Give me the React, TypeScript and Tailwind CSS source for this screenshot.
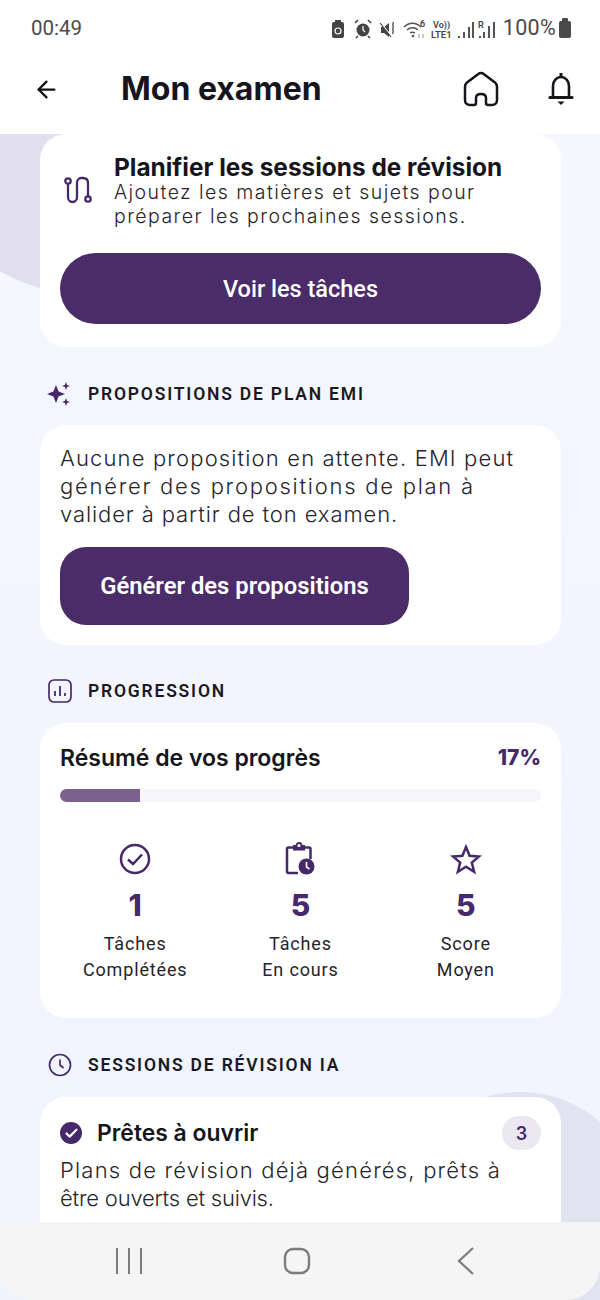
import React from "react";
import { ArrowLeft, Check } from "lucide-react";

const heading = "font-['Inter',sans-serif]";
const body = "font-['Inter',sans-serif]";
const label = "font-['Roboto',sans-serif]";

const SectionTitle: React.FC<{ icon: React.ReactNode; title: string }> = ({ icon, title }) => (
  <div className="flex h-[32px] items-center pt-[2px] pl-[6px]">
    <span className="flex w-[28px] justify-center">{icon}</span>
    <span className={`${label} ml-[14px] text-[17.5px] font-semibold tracking-[1.8px] text-[#1b1a20]`}>{title}</span>
  </div>
);

const Stat: React.FC<{ icon: React.ReactNode; value: string; lines: [string, string] }> = ({ icon, value, lines }) => (
  <div className="flex flex-col items-center">
    <div className="flex h-[36px] items-center">{icon}</div>
    <div className={`${heading} mt-[10px] h-[36px] text-[30px] leading-[36px] font-extrabold text-[#46296b]`}>{value}</div>
    <div className={`${label} mt-[8px] text-center text-[18px] leading-[26px] tracking-[0.85px] text-[#26242b]`}>
      {lines[0]}
      <br />
      {lines[1]}
    </div>
  </div>
);

const StatusBar: React.FC = () => (
  <div className="flex h-[44px] items-end justify-between pr-[29px] pb-[4px] pl-[31px] text-[#4a4a4a]">
    <span className={`${label} text-[20.5px] leading-[24px]`}>00:49</span>
    <div className="flex items-center">
      {/* notification icons, viewBox x = page x - 330 */}
      <svg width="170" height="24" viewBox="0 0 170 24" fill="none" className="mr-[3px]">
        <rect x="2" y="6" width="12" height="16" rx="2" fill="#444" />
        <rect x="5" y="4" width="6" height="3" fill="#444" />
        <circle cx="8" cy="15" r="3" stroke="#fff" strokeWidth="1.2" />
        <circle cx="33" cy="14" r="6.5" fill="#444" />
        <path d="M33 10v4l2 2" stroke="#fff" strokeWidth="1.2" />
        <path d="M25 7l3-3M41 7l-3-3M28 20l-2 2M38 20l2 2" stroke="#444" strokeWidth="1.6" />
        <path d="M51 11h3l5-4v14l-5-4h-3z" fill="#444" />
        <path d="M50 6l12 15" stroke="#fff" strokeWidth="1.4" />
        <path d="M50 7l11 14" stroke="#444" strokeWidth="1.2" />
        <path d="M63 6c1 1.500-1 2.500 0 4s-1 2.500 0 4-1 2.500 0 4" stroke="#444" strokeWidth="1.3" />
        <path d="M74 11c5-5 12-5 17 0M77 14c3-3 8-3 11 0M80 17c1.500-1 3.500-1 5 0" stroke="#555" strokeWidth="1.4" />
        <circle cx="83" cy="20" r="1.300" fill="#555" />
        <path d="M89 18v4M93 22v-4" stroke="#aaa" strokeWidth="1.200" />
        <text x="90" y="11" fontSize="9" fontWeight="600" fontFamily="Roboto, sans-serif" fill="#444">6</text>
        <text x="103" y="12" fontSize="9" fontWeight="600" fontFamily="Roboto, sans-serif" fill="#444">Vo))</text>
        <text x="101" y="22" fontSize="9.500" fontWeight="600" fontFamily="Roboto, sans-serif" fill="#444">LTE1</text>
        <path d="M129 20v2M134 16v6M139 11v11M143 6v16" stroke="#555" strokeWidth="2" />
        <text x="148" y="12" fontSize="9" fontWeight="600" fontFamily="Roboto, sans-serif" fill="#444">R</text>
        <path d="M150 20v2M154 16v6M159 10v12M164 6v16" stroke="#555" strokeWidth="2" />
      </svg>
      <span className={`${label} text-[21.5px] leading-[24px] tracking-[0.3px]`}>100%</span>
      <svg width="12" height="20" viewBox="0 0 12 20" className="ml-[3px]">
        <rect x="0" y="3" width="12" height="17" rx="2" fill="#4a4a4a" />
        <rect x="3" y="0" width="6" height="4" rx="1" fill="#4a4a4a" />
      </svg>
    </div>
  </div>
);

const App: React.FC = () => {
  return (
    <div className="relative flex h-[1300px] w-[600px] flex-col overflow-hidden bg-white">
      <StatusBar />
      <header className="flex h-[90px] items-center">
        <ArrowLeft className="ml-[33px] text-[#111]" size={27} strokeWidth={2} />
        <h1 className={`${heading} ml-[61px] text-[32px] font-bold text-[#17151c]`}>Mon examen</h1>
        <div className="ml-auto flex items-center pr-[26px]">
          <svg width="36" height="36" viewBox="0 0 36 36" fill="none" stroke="#17151c" strokeWidth="2.500">
            <path d="M18 2c-1 0-2 .4-3 1.200L4 11.500C2.500 12.700 2 14 2 16v13c0 3 2 5 5 5h4c1.200 0 2-1 2-2v-5c0-2.500 2-4 5-4s5 1.500 5 4v5c0 1 .8 2 2 2h4c3 0 5-2 5-5V16c0-2-.5-3.300-2-4.500L21 3.200C20 2.400 19 2 18 2z" />
          </svg>
          <svg width="26" height="32" viewBox="0 0 26 32" fill="none" stroke="#17151c" strokeWidth="2.600" className="ml-[49px]">
            <path d="M13 0v4" strokeWidth="3" />
            <path d="M5 24V13c0-5 3.500-9 8-9s8 4 8 9v11" />
            <path d="M2 24.500h22" strokeWidth="3.200" strokeLinecap="round" />
            <path d="M9.500 28.500h7L13 32z" fill="#17151c" stroke="none" />
          </svg>
        </div>
      </header>

      <main className="relative flex-1 overflow-hidden bg-gradient-to-b from-[#f5f7fe] to-[#f0f4ff]">
        {/* decorative blobs behind the cards */}
        <div className="absolute top-[-237px] left-[-102px] h-[400px] w-[400px] rounded-full bg-[#e2e0ee]" />
        <div className="absolute top-[958px] right-[-42px] h-[244px] w-[244px] rounded-full bg-[#e2e3f0]" />

        <div className="relative flex flex-col pr-[39px] pl-[40px]">
          <section className="h-[213px] rounded-[26px] bg-white px-[20px] pt-[20px]">
            <div className="flex">
              <svg width="30" height="30" viewBox="0 0 30 30" fill="none" stroke="#46296b" strokeWidth="2.300" className="mt-[21px] ml-[3px]">
                <circle cx="5" cy="6" r="2.700" />
                <circle cx="25" cy="24" r="2.700" />
                <path d="M5 9v13c0 3 2 5 4.500 5S14 25 14 22V8c0-3 2-5 4-5h2c3 0 5 2 5 5v13" />
              </svg>
              <div className="ml-[21px]">
                <div className={`${heading} text-[24.4px] leading-[26px] font-bold text-[#17151c]`}>Planifier les sessions de révision</div>
                <div className={`${body} text-[19.5px] leading-[24px] font-[350] tracking-[1.45px] text-[#26242b]`}>
                  Ajoutez les matières et sujets pour
                  <br />
                  préparer les prochaines sessions.
                </div>
              </div>
            </div>
            <button className={`${label} mt-[25px] h-[71px] w-full rounded-[36px] bg-[#4a2c69] pt-[2px] text-[23.5px] font-medium text-white`}>Voir les tâches</button>
          </section>

          <div className="mt-[30px]">
            <SectionTitle
              title="PROPOSITIONS DE PLAN EMI"
              icon={
                <svg width="28" height="28" viewBox="0 0 28 28" fill="#46296b">
                  <path d="M10 5l2.600 6.400L19 14l-6.400 2.600L10 23l-2.600-6.400L1 14l6.400-2.600z" />
                  <path d="M20 2l1.100 2.900L24 6l-2.900 1.100L20 10l-1.100-2.900L16 6l2.900-1.100z" />
                  <path d="M20 18l1.100 2.900L24 22l-2.900 1.100L20 26l-1.100-2.900L16 22l2.900-1.100z" />
                </svg>
              }
            />
          </div>

          <section className="mt-[16px] h-[220px] rounded-[26px] bg-white px-[20px] pt-[19px]">
            <p className={`${body} text-[22px] leading-[28px] font-[350] text-[#26242b]`}>
              <span className="block tracking-[1.15px]">Aucune proposition en attente. EMI peut</span>
              <span className="block tracking-[1.75px]">générer des propositions de plan à</span>
              <span className="block tracking-[0.9px]">valider à partir de ton examen.</span>
            </p>
            <button className={`${label} mt-[19px] h-[78px] w-[349px] rounded-[26px] bg-[#4a2c69] pt-[1px] text-[23.8px] font-semibold text-white`}>Générer des propositions</button>
          </section>

          <div className="mt-[29px]">
            <SectionTitle
              title="PROGRESSION"
              icon={
                <svg width="26" height="26" viewBox="0 0 26 26" fill="none" stroke="#46296b">
                  <rect x="2" y="2" width="22" height="22" rx="5" strokeWidth="1.700" />
                  <path d="M8 18v-5M13 18V8M18 18v-3" strokeWidth="1.800" />
                </svg>
              }
            />
          </div>

          <section className="mt-[17px] h-[295px] rounded-[26px] bg-white px-[20px] pt-[21px]">
            <div className="flex items-center justify-between">
              <span className={`${heading} text-[23px] leading-[28px] font-semibold text-[#17151c]`}>Résumé de vos progrès</span>
              <span className={`${heading} text-[21px] leading-[28px] font-extrabold text-[#46296b]`}>17%</span>
            </div>
            <div className="mt-[17px] h-[13px] overflow-hidden rounded-full bg-[#f6f6fa]">
              <div className="h-full w-[80px] bg-[#7b6190]" />
            </div>
            <div className="mt-[39px] grid grid-cols-3">
              <div className="flex flex-col items-center pr-[10px]">
                <Stat
                  value="1"
                  lines={["Tâches", "Complétées"]}
                  icon={
                    <svg width="32" height="32" viewBox="0 0 32 32" fill="none" stroke="#46296b" strokeWidth="2.500">
                      <circle cx="16" cy="16" r="14" />
                      <path d="M9 16.500l5 4.500 9-9.500" />
                    </svg>
                  }
                />
              </div>
              <Stat
                value="5"
                lines={["Tâches", "En cours"]}
                icon={
                  <svg width="30" height="34" viewBox="0 0 30 34" fill="none" stroke="#46296b" strokeWidth="2.500">
                    <path d="M13 31H3.500c-1 0-1.500-.5-1.500-1.500V7c0-1 .5-1.500 1.500-1.500H24c1 0 1.500.5 1.500 1.500v10" />
                    <rect x="8" y="3" width="12" height="5.500" fill="#46296b" stroke="none" />
                    <circle cx="14" cy="3.500" r="2.500" fill="#fff" strokeWidth="1.800" />
                    <circle cx="21.500" cy="24.500" r="8" fill="#46296b" stroke="none" />
                    <path d="M21.500 20v5l3 2" stroke="#fff" strokeWidth="1.600" />
                  </svg>
                }
              />
              <div className="flex flex-col items-center pl-[10px]">
                <Stat
                  value="5"
                  lines={["Score", "Moyen"]}
                  icon={
                    <svg width="32" height="32" viewBox="0 0 32 32" fill="none" stroke="#46296b" strokeWidth="2.500" strokeLinejoin="miter">
                      <path d="M16 4l3.600 8.800 9.400.7-7.200 6.100 2.300 9.200L16 23.800l-8.100 5 2.300-9.200L3 13.500l9.400-.7z" />
                    </svg>
                  }
                />
              </div>
            </div>
          </section>

          <div className="mt-[30px]">
            <SectionTitle
              title="SESSIONS DE RÉVISION IA"
              icon={
                <svg width="26" height="26" viewBox="0 0 26 26" fill="none" stroke="#46296b" strokeWidth="1.700">
                  <circle cx="13" cy="13" r="10.500" />
                  <path d="M13 7.500V13l3.500 3" />
                </svg>
              }
            />
          </div>

          <section className="mt-[17px] h-[200px] rounded-[26px] bg-white px-[20px] pt-[19px]">
            <div className="flex h-[34px] items-center">
              <span className="flex h-[22px] w-[22px] items-center justify-center rounded-full bg-[#46296b]">
                <Check className="text-white" size={15} strokeWidth={3.5} />
              </span>
              <span className={`${heading} ml-[15px] text-[22.9px] font-semibold text-[#17151c]`}>Prêtes à ouvrir</span>
              <span className={`${heading} ml-auto flex h-[34px] w-[39px] items-center justify-center rounded-full bg-[#ebe8f0] text-[18px] font-semibold text-[#46296b]`}>3</span>
            </div>
            <p className={`${body} mt-[6px] text-[22px] leading-[28px] font-[350] text-[#26242b]`}>
              <span className="block tracking-[1.2px]">Plans de révision déjà générés, prêts à</span>
              <span className="block tracking-[-0.2px]">être ouverts et suivis.</span>
            </p>
          </section>
        </div>
      </main>

      {/* android nav bar */}
      <nav className="absolute right-0 bottom-0 left-0 flex h-[78px] items-center gap-[140px] rounded-b-[34px] bg-[#f5f5f5] pl-[115px] text-[#7c7c7c]">
        <svg width="28" height="28" viewBox="0 0 28 28" stroke="currentColor" strokeWidth="2" fill="none">
          <path d="M2 1v26M14 1v26M26 1v26" />
        </svg>
        <svg width="28" height="28" viewBox="0 0 28 28" stroke="currentColor" strokeWidth="2.400" fill="none">
          <rect x="2" y="2" width="24" height="24" rx="8" />
        </svg>
        <svg width="28" height="28" viewBox="0 0 28 28" stroke="currentColor" strokeWidth="2.200" fill="none">
          <path d="M22 1L8 14l14 13" />
        </svg>
      </nav>
    </div>
  );
};

export default App;
